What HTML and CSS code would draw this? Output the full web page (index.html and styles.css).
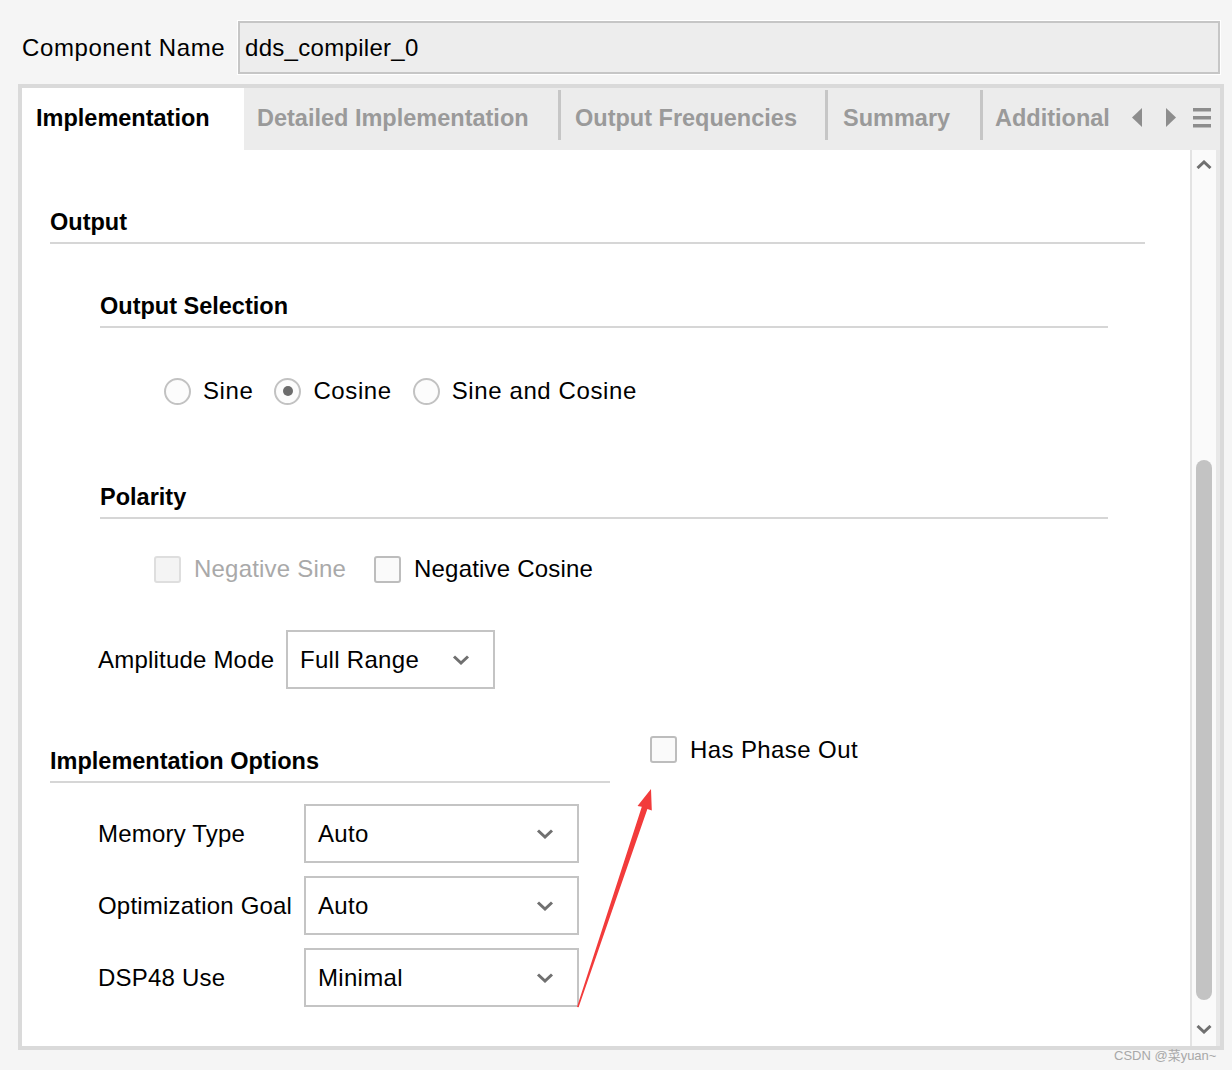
FILE: index.html
```html
<!DOCTYPE html>
<html>
<head>
<meta charset="utf-8">
<title>dds_compiler_0</title>
<link rel="stylesheet" href="styles.css">
</head>
<body>
<div class="name-row">
  <div class="name-label">Component Name</div>
  <div class="name-input">dds_compiler_0</div>
</div>

<div class="panel">
  <div class="tabs">
    <div class="tab active">Implementation</div>
    <div class="tab t2">Detailed Implementation</div>
    <div class="sep"></div>
    <div class="tab t3">Output Frequencies</div>
    <div class="sep"></div>
    <div class="tab t4">Summary</div>
    <div class="sep"></div>
    <div class="tab t5">Additional</div>
    <svg class="nav-left" width="10" height="19" viewBox="0 0 10 19"><path d="M10 0 L0 9.5 L10 19 Z" fill="#8d8d8d"/></svg>
    <svg class="nav-right" width="10" height="19" viewBox="0 0 10 19"><path d="M0 0 L10 9.5 L0 19 Z" fill="#8d8d8d"/></svg>
    <svg class="nav-menu" width="18" height="20" viewBox="0 0 18 20"><rect x="0" y="0" width="18" height="3.5" fill="#8d8d8d"/><rect x="0" y="8" width="18" height="3.5" fill="#8d8d8d"/><rect x="0" y="16" width="18" height="3.5" fill="#8d8d8d"/></svg>
  </div>

  <div class="main">
    <div class="content">
      <div class="h top">Output</div>

      <div class="sub">
        <div class="h">Output Selection</div>
        <div class="radio-row">
          <div class="opt"><span class="radio"></span>Sine</div>
          <div class="opt"><span class="radio on"></span>Cosine</div>
          <div class="opt"><span class="radio"></span>Sine and Cosine</div>
        </div>

        <div class="h polarity">Polarity</div>
        <div class="check-row">
          <div class="opt dis"><span class="check dis"></span>Negative Sine</div>
          <div class="opt"><span class="check"></span>Negative Cosine</div>
        </div>
      </div>

      <div class="amp-row">
        <div class="amp-label">Amplitude Mode</div>
        <div class="select amp">Full Range<svg width="18" height="10" viewBox="0 0 18 10"><path d="M2 1.5 L9 8 L16 1.5" fill="none" stroke="#707070" stroke-width="3"/></svg></div>
      </div>

      <div class="impl-row">
        <div class="impl-left">
          <div class="h">Implementation Options</div>
          <div class="form">
            <div class="frow">
              <div class="flabel">Memory Type</div>
              <div class="select">Auto<svg width="18" height="10" viewBox="0 0 18 10"><path d="M2 1.5 L9 8 L16 1.5" fill="none" stroke="#707070" stroke-width="3"/></svg></div>
            </div>
            <div class="frow">
              <div class="flabel">Optimization Goal</div>
              <div class="select">Auto<svg width="18" height="10" viewBox="0 0 18 10"><path d="M2 1.5 L9 8 L16 1.5" fill="none" stroke="#707070" stroke-width="3"/></svg></div>
            </div>
            <div class="frow">
              <div class="flabel">DSP48 Use</div>
              <div class="select">Minimal<svg width="18" height="10" viewBox="0 0 18 10"><path d="M2 1.5 L9 8 L16 1.5" fill="none" stroke="#707070" stroke-width="3"/></svg></div>
            </div>
          </div>
        </div>
        <div class="impl-right">
          <div class="opt"><span class="check"></span>Has Phase Out</div>
        </div>
      </div>
    </div>

    <div class="scrollbar">
      <svg class="sb-up" width="16" height="9" viewBox="0 0 16 9"><path d="M1.5 8 L8 2 L14.5 8" fill="none" stroke="#707070" stroke-width="3"/></svg>
      <div class="thumb"></div>
      <svg class="sb-down" width="16" height="9" viewBox="0 0 16 9"><path d="M1.5 1 L8 7 L14.5 1" fill="none" stroke="#707070" stroke-width="3"/></svg>
    </div>
  </div>
</div>

<svg class="arrow" width="1232" height="1070" viewBox="0 0 1232 1070">
  <polygon points="651,789 637.5,806 641.8,806.8 577,1007 578.6,1007.2 647.4,809 651.8,810.5" fill="#f23b3b"/>
</svg>

<div class="watermark">CSDN @菜yuan~</div>
</body>
</html>
```

FILE: styles.css
```css
body {
  margin: 0;
  width: 1232px;
  height: 1070px;
  overflow: hidden;
  position: relative;
  background: #f5f5f5;
  font-family: "Liberation Sans", Arial, sans-serif;
  color: #000;
}

.name-row {
  display: flex;
  align-items: center;
  padding: 21px 12px 0 22px;
  height: 53px;
}

.name-label {
  width: 216px;
  font-size: 24px;
  letter-spacing: 0.6px;
  flex: none;
}

.name-input {
  flex: 1;
  height: 53px;
  box-sizing: border-box;
  border: 2px solid #c6c6c6;
  background: #ededed;
  box-shadow: 0 0 0 1px #ffffff;
  padding-left: 5px;
  display: flex;
  align-items: center;
  font-size: 24px;
  letter-spacing: 0.3px;
}

.panel {
  margin: 10px 0 0 18px;
  width: 1206px;
  height: 966px;
  box-sizing: border-box;
  border: 4px solid #dadada;
  background: #ffffff;
  display: flex;
  flex-direction: column;
}

.tabs {
  height: 62px;
  flex: none;
  background: #ececec;
  display: flex;
  align-items: stretch;
}

.tab {
  font-weight: bold;
  font-size: 23.5px;
  color: #9a9a9a;
  display: flex;
  align-items: center;
  white-space: nowrap;
  overflow: hidden;
  box-sizing: border-box;
  flex: none;
  padding-bottom: 2px;
}

.tab.active {
  background: #ffffff;
  color: #000;
  width: 222px;
  padding-left: 14px;
}

.tab.t2 { width: 314px; padding-left: 13px; }
.tab.t3 { width: 264px; padding-left: 14px; }
.tab.t4 { width: 152px; padding-left: 15px; }
.tab.t5 { width: 137px; padding-left: 12px; }

.sep {
  width: 3px;
  height: 50px;
  margin-top: 2px;
  background: #c6c6c6;
  flex: none;
}

.nav-left { align-self: center; margin-left: 12px; flex: none; margin-bottom: 3px; }
.nav-right { align-self: center; margin-left: 24px; flex: none; margin-bottom: 3px; }
.nav-menu { align-self: center; margin-left: 17px; flex: none; margin-bottom: 3px; }

.main {
  flex: 1;
  display: flex;
  min-height: 0;
}

.content {
  flex: 1;
  padding: 52px 0 0 28px;
  box-sizing: border-box;
}

.scrollbar {
  width: 30px;
  flex: none;
  box-sizing: border-box;
  border-left: 2px solid #e3e3e3;
  border-right: 4px solid #e8e8e8;
  background: #fafafa;
  display: flex;
  flex-direction: column;
  align-items: center;
}

.sb-up { margin-top: 10px; flex: none; }
.thumb {
  margin-top: 291px;
  width: 16px;
  height: 540px;
  border-radius: 8px;
  background: #c3c3c3;
  flex: none;
}
.sb-down { margin-top: 25px; flex: none; }

.h {
  font-weight: bold;
  font-size: 23.5px;
  line-height: 39px;
  border-bottom: 2px solid #d6d6d6;
  white-space: nowrap;
}

.h.top {
  width: 1095px;
  line-height: 40px;
}

.sub {
  margin-left: 50px;
  width: 1008px;
  margin-top: 43px;
}

.h.polarity {
  margin-top: 67px;
}

.opt {
  display: flex;
  align-items: center;
  gap: 12px;
  font-size: 24px;
  letter-spacing: 0.4px;
  white-space: nowrap;
}

.opt.dis { color: #a9a9a9; }

.radio-row {
  margin-top: 43px;
  height: 40px;
  display: flex;
  align-items: center;
  gap: 21px;
  padding-left: 64px;
}

.radio-row .opt { letter-spacing: 0.6px; }

.radio {
  width: 27px;
  height: 27px;
  box-sizing: border-box;
  border: 2px solid #c2c2c2;
  border-radius: 50%;
  background: #fcfcfc;
  display: flex;
  align-items: center;
  justify-content: center;
  flex: none;
}

.radio.on::after {
  content: "";
  width: 10px;
  height: 10px;
  border-radius: 50%;
  background: #6c6c6c;
}

.check-row {
  margin-top: 30px;
  height: 40px;
  display: flex;
  align-items: center;
  gap: 28px;
  padding-left: 54px;
}

.check-row .opt, .impl-right .opt { gap: 13px; }
.check-row .opt { letter-spacing: 0.2px; }

.check {
  width: 27px;
  height: 27px;
  box-sizing: border-box;
  border: 2px solid #bdbdbd;
  border-radius: 3px;
  background: #fafafa;
  flex: none;
}

.check.dis {
  border-color: #dedede;
  background: #f4f4f4;
}

.amp-row {
  margin: 41px 0 0 48px;
  display: flex;
  align-items: center;
}

.amp-label {
  width: 188px;
  font-size: 24px;
  letter-spacing: 0.2px;
  white-space: nowrap;
  flex: none;
}

.select {
  width: 275px;
  height: 59px;
  box-sizing: border-box;
  border: 2px solid #c4c4c4;
  background: #ffffff;
  display: flex;
  align-items: center;
  justify-content: space-between;
  padding: 0 23px 0 12px;
  font-size: 24px;
  letter-spacing: 0.3px;
  flex: none;
}

.select.amp { width: 209px; }

.impl-row {
  margin-top: 47px;
  display: flex;
  align-items: flex-start;
}

.impl-left {
  width: 560px;
  padding-top: 6px;
  flex: none;
}

.form {
  margin: 21px 0 0 48px;
  display: flex;
  flex-direction: column;
  gap: 13px;
}

.frow {
  display: flex;
  align-items: center;
}

.flabel {
  width: 206px;
  font-size: 24px;
  letter-spacing: 0.2px;
  white-space: nowrap;
  flex: none;
}

.impl-right {
  margin-left: 40px;
}

.impl-right .opt { height: 27px; }

.arrow {
  position: absolute;
  left: 0;
  top: 0;
  pointer-events: none;
}

.watermark {
  position: absolute;
  left: 1114px;
  top: 1045px;
  font-size: 13px;
  color: #a8a8a8;
  font-family: "Liberation Sans", "Noto Sans CJK SC", sans-serif;
  white-space: nowrap;
}
```
